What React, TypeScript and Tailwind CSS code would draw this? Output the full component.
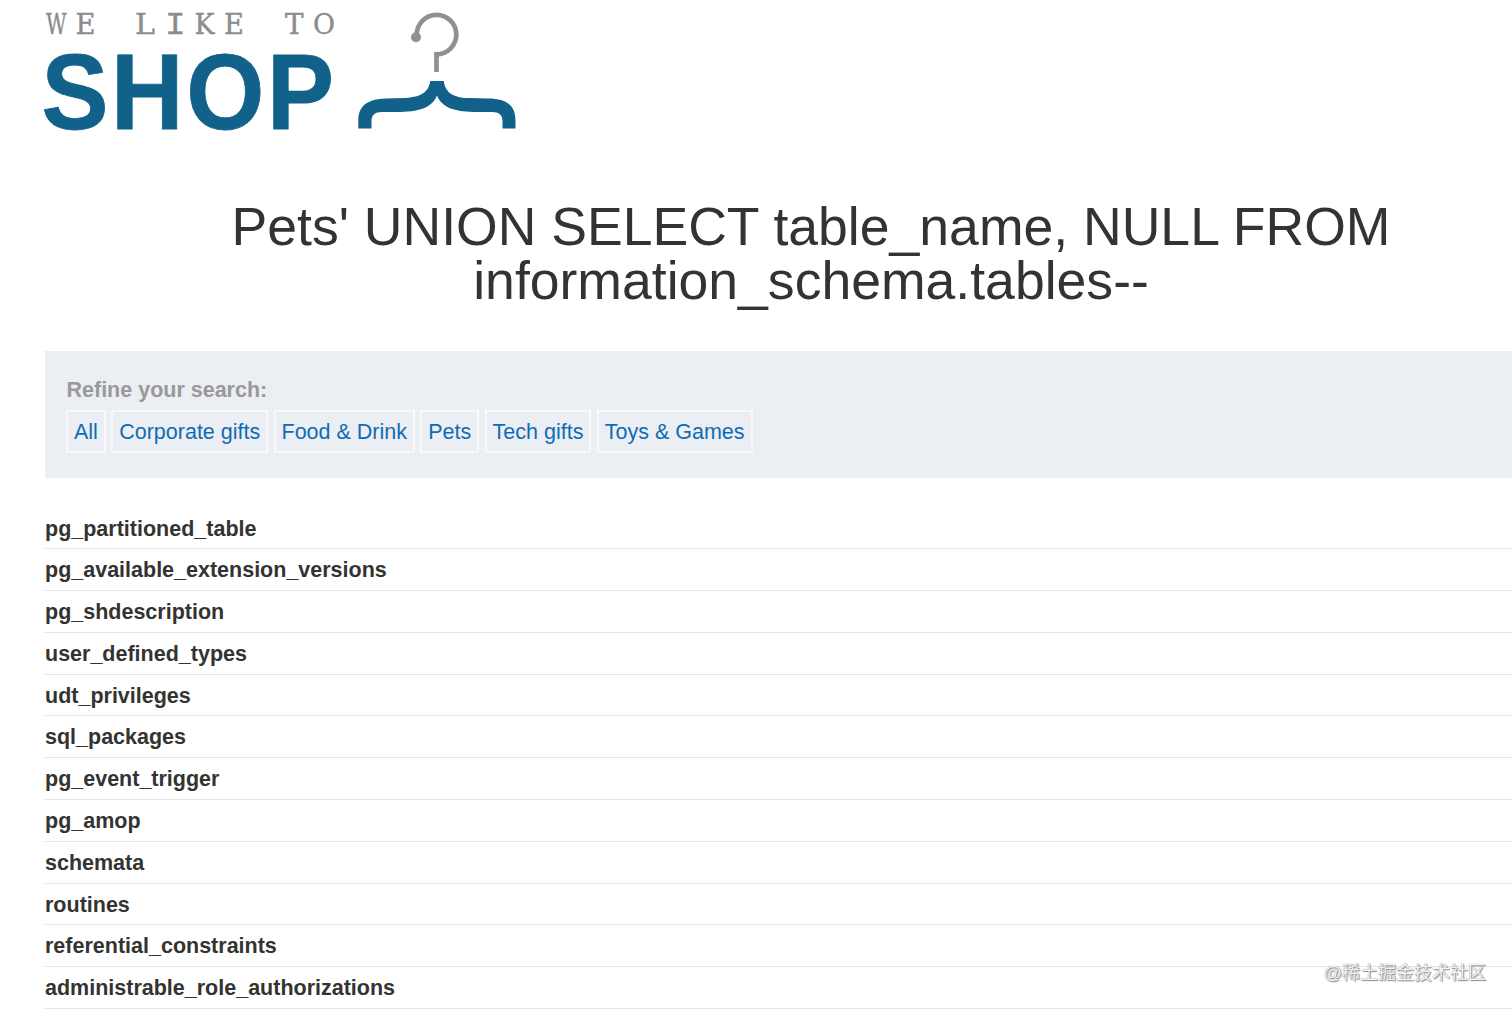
import React from 'react';

interface Glyph {
    char: string;
    x: number;
    width: number;
    mono?: boolean;
}

const tagline: Glyph[] = [
    { char: 'W', x: 46, width: 20.5 },
    { char: 'E', x: 75.5, width: 20 },
    { char: 'L', x: 135, width: 20 },
    { char: 'I', x: 165, width: 20.5, mono: true },
    { char: 'K', x: 194.5, width: 20 },
    { char: 'E', x: 224, width: 20 },
    { char: 'T', x: 285, width: 18.5 },
    { char: 'O', x: 313, width: 22 },
];

const categories = ['All', 'Corporate gifts', 'Food & Drink', 'Pets', 'Tech gifts', 'Toys & Games'];

const tableNames = [
    'pg_partitioned_table',
    'pg_available_extension_versions',
    'pg_shdescription',
    'user_defined_types',
    'udt_privileges',
    'sql_packages',
    'pg_event_trigger',
    'pg_amop',
    'schemata',
    'routines',
    'referential_constraints',
    'administrable_role_authorizations',
];

const Logo: React.FC = () => (
    <svg width="540" height="150" viewBox="0 0 540 150" className="block overflow-visible">
        <text y="33.6" fill="#8c8c8c" stroke="#8c8c8c" strokeWidth="0.4">
            {tagline.map((glyph, i) => (
                <tspan
                    key={i}
                    x={glyph.x}
                    textLength={glyph.width}
                    lengthAdjust="spacingAndGlyphs"
                    className={glyph.mono ? "font-['Liberation_Mono',monospace] text-[31px]" : "font-['DejaVu_Serif',serif] text-[27.5px]"}
                >
                    {glyph.char}
                </tspan>
            ))}
        </text>
        <text
            transform="translate(41.4 128.7) scale(0.93 1)"
            fontSize="108"
            fontWeight="700"
            letterSpacing="2.9"
            fill="#12618a"
            stroke="#12618a"
            strokeWidth="0.8"
            className="font-['Liberation_Sans',sans-serif]"
        >
            SHOP
        </text>
        <path d="M416.8 37V34.5A19.75 19.75 0 1 1 436.5 54.3V72" fill="none" stroke="#909090" strokeWidth="4.7" />
        <circle cx="416" cy="37.3" r="5" fill="#909090" />
        <path
            d="M430.2 81H443.8C445 90 450 98 469 98L488 98.5C506 98.5 515.5 105 515.5 121V128.5H502.5V121C502.5 115 499 112 492 112H478C455 112 442 108 437 95.5C432 108 419 112 396 112H382C375 112 371.5 115 371.5 121V128.5H358.3V121C358.3 106 367 99 386 98.5L405 98C424 97 429 90 430.2 81Z"
            fill="#12618a"
        />
    </svg>
);

const App: React.FC = () => {
    return (
        <div className="h-[1009px] overflow-hidden bg-white font-['Liberation_Sans',Arial,sans-serif] text-[21.5px] text-[#333332]">
            <header className="h-[200px]">
                <Logo />
            </header>

            <main className="ml-[45px]">
                <h1 className="h-[151px] w-[1532px] text-center text-[53.55px] leading-[54px]">
                    Pets' UNION SELECT table_name, NULL FROM
                    <br />
                    information_schema.tables--
                </h1>

                <section className="h-[127px] bg-[#ebeef2] pl-[21.5px] pt-[26px]">
                    <p className="h-[33px] text-[21.5px] font-bold leading-[27px] text-[#999999]">Refine your search:</p>
                    <nav className="-ml-[0.5px] flex gap-[5.3px]">
                        {categories.map(category => (
                            <a key={category} href="#" className="h-[43px] whitespace-nowrap border-2 border-[#f7f9fb] px-1.5 leading-[40px] text-[#0f6cb6]">
                                {category}
                            </a>
                        ))}
                    </nav>
                </section>

                <ul className="mt-[29.5px]">
                    {tableNames.map(name => (
                        <li key={name} className="h-[41.8px] border-b border-[#e4e5e6] font-bold leading-[42px]">
                            {name}
                        </li>
                    ))}
                </ul>
            </main>

            <span className="absolute right-[26px] top-[961px] font-['Liberation_Sans','Noto_Sans_CJK_SC',sans-serif] text-[18px] leading-6 text-[#f4f4f4] [text-shadow:0_0_1px_#777,1px_1px_1px_#888]">
                @稀土掘金技术社区
            </span>
        </div>
    );
};

export default App;
